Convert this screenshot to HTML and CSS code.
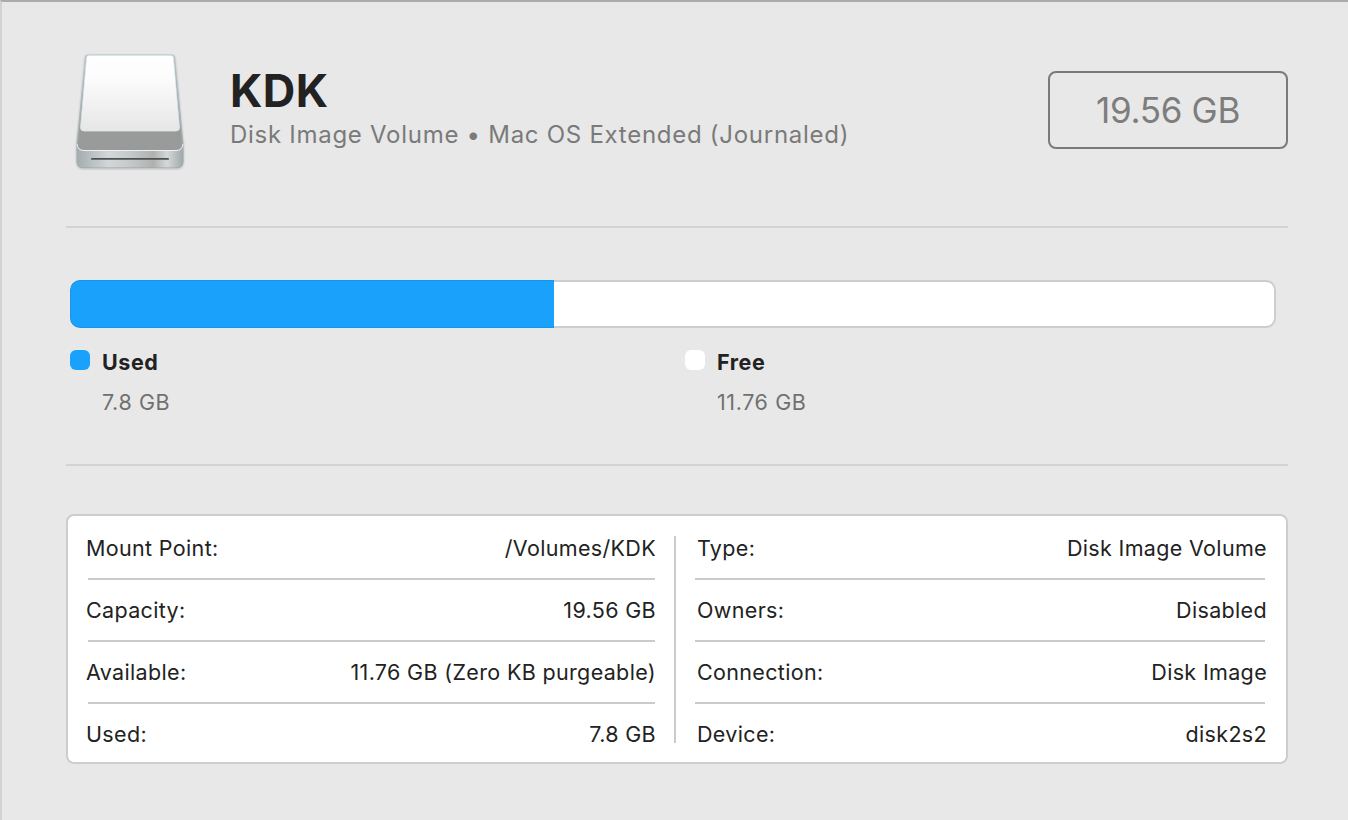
FILE: index.html
```html
<!DOCTYPE html>
<html lang="en">
<head>
<meta charset="utf-8">
<title>KDK</title>
<link rel="stylesheet" href="styles.css">
</head>
<body>
<main class="window">
  <header class="header">
    <svg class="disk" width="108" height="116" viewBox="0 0 108 116" aria-hidden="true">
      <defs>
        <linearGradient id="top" x1="0" y1="0" x2="0" y2="1">
          <stop offset="0" stop-color="#ffffff"/>
          <stop offset=".3" stop-color="#fcfcfc"/>
          <stop offset="1" stop-color="#e6e6e6"/>
        </linearGradient>
        <linearGradient id="body" x1="0" y1="0" x2="0" y2="1">
          <stop offset="0" stop-color="#b9c6cb"/>
          <stop offset="1" stop-color="#9aa5a8"/>
        </linearGradient>
        <linearGradient id="front" x1="0" y1="0" x2="1" y2="0">
          <stop offset="0" stop-color="#a3adaf"/>
          <stop offset=".3" stop-color="#d3d7d8"/>
          <stop offset=".5" stop-color="#c6c9ca"/>
          <stop offset=".72" stop-color="#b0b0b0"/>
          <stop offset=".85" stop-color="#d5d8d8"/>
          <stop offset="1" stop-color="#9fa9ab"/>
        </linearGradient>
      </defs>
      <path d="M9 3 Q9.200 0.500 12 0.500 H96 Q98.800 0.500 99 3 L107.500 90 V107 Q107.500 114 101 114 H7 Q0.500 114 0.500 107 V90 Z" fill="url(#body)"/>
      <path d="M10 3.500 Q10.200 1.500 12.500 1.500 H95.500 Q97.800 1.500 98 3.500 L106 90 Q106 96 100 96 H8 Q2 96 2 90 Z" fill="#999a9a"/>
      <path d="M10.500 3.500 Q10.700 1.500 13 1.500 H95 Q97.300 1.500 97.500 3.500 L103.500 73.500 Q103.500 77 100 77 H8 Q4.500 77 4.500 73.500 Z" fill="url(#top)" stroke="#d9e8ee" stroke-width=".8"/>
      <path d="M1 90 Q1.500 96.500 8 96.500 H100 Q106.500 96.500 107 90 V107 Q107 113.500 100 113.500 H8 Q1 113.500 1 107 Z" fill="url(#front)"/>
      <path d="M1 90 Q1.500 96.500 8 96.500 H100 Q106.500 96.500 107 90" fill="none" stroke="#eef1f2" stroke-width="1"/>
      <rect x="15" y="104" width="78" height="1.800" rx=".9" fill="#4c5152"/>
    </svg>
    <div class="title-block">
      <h1 class="title">KDK</h1>
      <p class="subtitle">Disk Image Volume • Mac OS Extended (Journaled)</p>
    </div>
    <div class="size-box">19.56 GB</div>
  </header>

  <section class="usage">
    <div class="bar">
      <div class="bar-fill"></div>
      <div class="bar-rest"></div>
    </div>
    <div class="legend">
      <div class="legend-item">
        <span class="swatch swatch-used"></span>
        <div>
          <div class="legend-label">Used</div>
          <div class="legend-value">7.8 GB</div>
        </div>
      </div>
      <div class="legend-item">
        <span class="swatch swatch-free"></span>
        <div>
          <div class="legend-label">Free</div>
          <div class="legend-value">11.76 GB</div>
        </div>
      </div>
    </div>
  </section>

  <section class="details">
    <dl class="col col-left">
      <div class="row"><dt>Mount Point:</dt><dd>/Volumes/KDK</dd></div>
      <div class="row"><dt>Capacity:</dt><dd>19.56 GB</dd></div>
      <div class="row"><dt>Available:</dt><dd>11.76 GB (Zero KB purgeable)</dd></div>
      <div class="row"><dt>Used:</dt><dd>7.8 GB</dd></div>
    </dl>
    <div class="col-divider"></div>
    <dl class="col col-right">
      <div class="row"><dt>Type:</dt><dd>Disk Image Volume</dd></div>
      <div class="row"><dt>Owners:</dt><dd>Disabled</dd></div>
      <div class="row"><dt>Connection:</dt><dd>Disk Image</dd></div>
      <div class="row"><dt>Device:</dt><dd>disk2s2</dd></div>
    </dl>
  </section>
</main>
</body>
</html>
```
FILE: styles.css
```css
* { box-sizing: border-box; }
html, body { margin: 0; height: 100%; overflow: hidden; }
body {
  background: #e8e8e8;
  color: #222;
  font-family: Inter, "Liberation Sans", sans-serif;
}
.window {
  height: 820px;
  padding: 0 60px 0 64px;
  border-top: 2px solid #ababab;
  border-left: 2px solid #d2d2d2;
}
.header {
  display: flex;
  align-items: flex-start;
  height: 226px;
  padding: 52px 0 0 10px;
  border-bottom: 2px solid #d3d3d3;
}
.disk {
  flex: none;
  display: block;
  filter: drop-shadow(0 1px 1px rgba(0, 0, 0, .22));
}
.title-block { margin-left: 46px; padding-top: 10px; flex: 1; }
.title {
  margin: 0;
  font-size: 45px;
  line-height: 54px;
  font-weight: 700;
  color: #222;
  letter-spacing: 0.5px;
}
.subtitle {
  margin: 3px 0 0;
  font-size: 24px;
  line-height: 28px;
  color: #7a7a7a;
  letter-spacing: 0.72px;
}
.size-box {
  width: 240px;
  height: 78px;
  margin-top: 17px;
  border: 2px solid #7a7a7a;
  border-radius: 8px;
  display: flex;
  align-items: center;
  justify-content: center;
  font-size: 35px;
  color: #7d7d7d;
  letter-spacing: -0.3px;
}
.usage {
  height: 238px;
  padding: 52px 12px 0 4px;
  border-bottom: 2px solid #d3d3d3;
}
.bar { display: flex; height: 48px; }
.bar-fill {
  flex: none;
  width: 484px;
  background: #1aa1fb;
  border: 1px solid #1896ea;
  border-right: 0;
  border-radius: 10px 0 0 10px;
}
.bar-rest {
  flex: 1;
  background: #fff;
  border: 2px solid #cdcdcd;
  border-left: 0;
  border-radius: 0 10px 10px 0;
}
.legend { display: flex; margin-top: 22px; }
.legend-item { display: flex; flex: none; gap: 12px; width: 615px; }
.swatch { flex: none; width: 20px; height: 20px; border-radius: 6px; }
.swatch-used { background: #1aa1fb; }
.swatch-free { background: #fff; }
.legend-label {
  font-size: 21.500px;
  line-height: 24px;
  font-weight: 700;
  color: #222;
  letter-spacing: 0.55px;
}
.legend-value {
  margin-top: 15px;
  font-size: 21.500px;
  line-height: 26px;
  color: #707070;
  letter-spacing: 0.6px;
}
.details {
  display: flex;
  margin-top: 48px;
  height: 250px;
  padding: 2px 19px 0 18px;
  background: #fff;
  border: 2px solid #cdcdcd;
  border-radius: 8px;
}
.col { margin: 0; width: 570px; flex: none; }
.col-divider {
  flex: none;
  width: 2px;
  margin: 18px 21px 19px 18px;
  background: #cbcbcb;
}
.row {
  display: flex;
  justify-content: space-between;
  align-items: center;
  height: 62px;
  border-bottom: 2px solid #cbcbcb;
  font-size: 21.500px;
  line-height: 26px;
  letter-spacing: 0.34px;
}
.row:last-child { height: 58px; padding-top: 2px; border-bottom: 0; }
.col-left .row { margin: 0 1px 0 2px; }
.col-left dt { margin-left: -2px; }
.col-left dd { margin-right: -1px; }
.col-right .row { margin: 0 2px 0 -2px; }
.col-right dt { margin-left: 2px; }
.col-right dd { margin-right: -2px; }
dt, dd { color: #222; }
dd { margin: 0; }
```
